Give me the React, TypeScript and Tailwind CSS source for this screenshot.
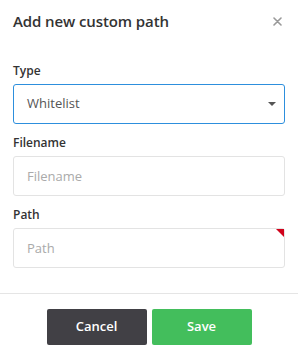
import React from 'react';

export default function App() {
  return (
    <div className="w-[298px] h-[359px] bg-white text-[#333]" style={{ fontFamily: '"Open Sans", sans-serif' }}>
      {/* Header */}
      <div className="relative px-[13px] pt-[11px]">
        <h2 className="text-[15px] font-semibold leading-[20px] tracking-[-0.1px]">Add new custom path</h2>
        <button className="absolute right-[16px] top-[17px]">
          <svg width="9" height="9" viewBox="0 0 9 9">
            <path d="M1 1 L8 8 M8 1 L1 8" stroke="#999" strokeWidth="1.6" strokeLinecap="round" />
          </svg>
        </button>
      </div>

      {/* Body */}
      <div className="px-[13px] pt-[32px]">
        <label className="block text-[12px] font-semibold leading-[16px] mb-[5px]">Type</label>
        <div className="relative h-[40px] border border-[#2d8fdd] rounded-[3px] flex items-center px-[13px] text-[13px] text-[#555]">
          Whitelist
          <svg className="absolute right-[8px] top-[17px]" width="8" height="4" viewBox="0 0 8 4">
            <path d="M0 0 L8 0 L4 4 Z" fill="#555" />
          </svg>
        </div>

        <label className="block text-[12px] font-semibold leading-[16px] mt-[11px] mb-[5px]">Filename</label>
        <input
          className="block w-full h-[40px] border border-[#e3e3e3] rounded-[3px] px-[13px] text-[13px] placeholder-[#aaa] outline-none"
          placeholder="Filename"
        />

        <label className="block text-[12px] font-semibold leading-[16px] mt-[11px] mb-[5px]">Path</label>
        <div className="relative">
          <input
            className="block w-full h-[40px] border border-[#e3e3e3] rounded-[3px] px-[13px] text-[13px] placeholder-[#aaa] outline-none"
            placeholder="Path"
          />
          <svg className="absolute right-[1px] top-[1px]" width="8" height="8" viewBox="0 0 8 8">
            <path d="M0 0 L8 0 L8 8 Z" fill="#d0021b" />
          </svg>
        </div>
      </div>

      {/* Footer */}
      <div className="mt-[25px] border-t border-[#e5e5e5] flex justify-center gap-[5px] pt-[15px]">
        <button className="w-[100px] h-[36px] rounded-[2px] bg-[#414045] text-white text-[13px] font-semibold">Cancel</button>
        <button className="w-[100px] h-[36px] rounded-[2px] bg-[#43be5c] text-white text-[13px] font-semibold">Save</button>
      </div>
    </div>
  );
}
